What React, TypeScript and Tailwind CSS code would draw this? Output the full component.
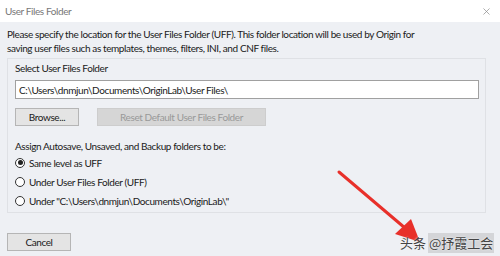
import React from 'react'
import { X } from 'lucide-react'

function Radio({ checked, label }: { checked?: boolean; label: string }) {
  return (
    <div className="flex items-center gap-[4px] h-[19px]">
      <span className="w-[10px] h-[10px] rounded-full border border-[#333] bg-white flex items-center justify-center">
        {checked && <span className="w-[5px] h-[5px] rounded-full bg-[#222]" />}
      </span>
      <span>{label}</span>
    </div>
  )
}

export default function App() {
  return (
    <div className="relative w-[500px] h-[256px] overflow-hidden bg-[#eef0f4] text-[#1a1a1a] text-[10px] leading-[14px] tracking-[-0.4px] whitespace-nowrap" style={{ fontFamily: 'Lato, "Liberation Sans", sans-serif' }}>
      <div className="h-[22px] bg-white flex items-center justify-between pl-[5px] pr-[8px]">
        <span className="text-[#777]">User Files Folder</span>
        <X size={11} strokeWidth={1.5} className="text-[#888]" />
      </div>

      <div className="px-[7px] pt-[5px]">
        <p className="leading-[14px]">
          Please specify the location for the User Files Folder (UFF). This folder location will be used by Origin for<br />
          saving user files such as templates, themes, filters, INI, and CNF files.
        </p>

        <div className="mt-[3px] w-[479px] h-[155px] border border-[#dfe1e5] px-[7px] pt-[2px]">
          <div className="h-[14px]">Select User Files Folder</div>
          <div className="mt-[5px] w-[464px] h-[19px] bg-white border border-[#a0a0a0] px-[3px] flex items-center">
            C:\Users\dnmjun\Documents\OriginLab\User Files\
          </div>
          <div className="mt-[9px] flex gap-[18px]">
            <button className="w-[64px] h-[18px] bg-[#e4e4e4] border border-[#b5b5b5] flex items-center justify-center">Browse...</button>
            <button className="w-[169px] h-[18px] bg-[#d6d6d6] border border-[#cdcdcd] text-[#999] flex items-center justify-center">Reset Default User Files Folder</button>
          </div>
          <div className="mt-[13px] h-[14px]">Assign Autosave, Unsaved, and Backup folders to be:</div>
          <Radio checked label="Same level as UFF" />
          <Radio label="Under User Files Folder (UFF)" />
          <Radio label={'Under "C:\\Users\\dnmjun\\Documents\\OriginLab\\"'} />
        </div>

        <button className="mt-[20px] w-[64px] h-[18px] bg-[#e4e4e4] border border-[#b5b5b5] flex items-center justify-center">Cancel</button>
      </div>

      <svg className="absolute left-0 top-0" width="500" height="256">
        <line x1="339" y1="172" x2="405" y2="228" stroke="#e8302a" strokeWidth="3" strokeLinecap="round" />
        <polygon points="420,242 395,234 411,219" fill="#e8302a" />
      </svg>

      <div className="absolute left-[400px] top-[233px] flex items-center text-[13px] leading-[20px] tracking-normal text-[#444] whitespace-nowrap" style={{ fontFamily: '"Noto Sans CJK SC", sans-serif', textShadow: '0 0 2px #fff' }}>
        <span>头条</span>
        <span className="ml-[2px] bg-[#d4d5d8] px-[1px]">@抒霞工会</span>
      </div>
    </div>
  )
}
